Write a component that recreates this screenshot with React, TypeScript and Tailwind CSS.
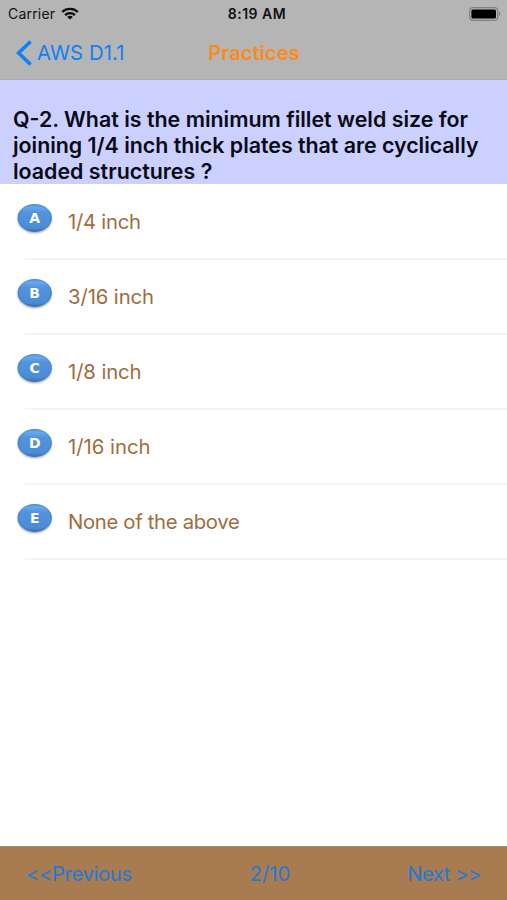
import { useState } from "react"

interface Option {
  letter: string
  text: string
  tracking: string
}

const options: Option[] = [
  { letter: "A", text: "1/4 inch", tracking: "tracking-[-0.25px]" },
  { letter: "B", text: "3/16 inch", tracking: "tracking-[-0.1px]" },
  { letter: "C", text: "1/8 inch", tracking: "tracking-[-0.1px]" },
  { letter: "D", text: "1/16 inch", tracking: "tracking-[0px]" },
  { letter: "E", text: "None of the above", tracking: "tracking-[-0.32px]" },
]

function WifiIcon() {
  return (
    <svg width="18" height="14" viewBox="0 0 18 14" fill="none" stroke="#0a0a0a" strokeWidth="2.4">
      <path d="M1.2 5C5.5 0.8 12.5 0.8 16.8 5" />
      <path d="M4.1 8.1C6.8 5.5 11.2 5.5 13.9 8.1" />
      <path d="M9 12.6L6.2 9.9C7.8 8.5 10.2 8.5 11.8 9.9Z" fill="#0a0a0a" stroke="none" />
    </svg>
  )
}

function BatteryIcon() {
  return (
    <svg width="32" height="14" viewBox="0 0 32 14" fill="none">
      <rect x="0.7" y="0.7" width="28" height="12.6" rx="3.4" stroke="#808080" strokeWidth="1.2" />
      <rect x="2.4" y="2.4" width="24.6" height="9.2" rx="1.6" fill="#000" />
      <path d="M30 4.8C31.6 5.4 31.6 8.6 30 9.2Z" fill="#777" />
    </svg>
  )
}

function Badge({ letter }: { letter: string }) {
  return (
    <svg width="40" height="36" viewBox="0 0 40 36" className="mt-[17px] shrink-0">
      <defs>
        <linearGradient id={"fill" + letter} x1="0" y1="0" x2="0" y2="1">
          <stop offset="0" stopColor="#5094dc" />
          <stop offset="0.12" stopColor="#68a7ea" />
          <stop offset="0.3" stopColor="#5293dc" />
          <stop offset="0.85" stopColor="#4b8cd6" />
          <stop offset="1" stopColor="#396ba9" />
        </linearGradient>
        <filter id={"shadow" + letter} x="-20%" y="-20%" width="140%" height="150%">
          <feGaussianBlur stdDeviation="1" />
        </filter>
      </defs>
      <ellipse cx="19.7" cy="18.3" rx="16.6" ry="13.8" fill="#5d6673" opacity="0.65" filter={"url(#shadow" + letter + ")"} />
      <ellipse cx="19.7" cy="16.9" rx="17.2" ry="14" fill={"url(#fill" + letter + ")"} />
      <ellipse cx="19.7" cy="16.7" rx="16.4" ry="13.2" fill="none" stroke="#3d76b9" strokeWidth="0.8" opacity="0.4" />
      <text x="19.7" y="22" textAnchor="middle" fill="#fff" fontSize="14" fontWeight="700" fontFamily="'DejaVu Sans', sans-serif">
        {letter}
      </text>
    </svg>
  )
}

export default function App() {
  const [selected, setSelected] = useState("")

  return (
    <div className="flex h-[900px] w-full flex-col overflow-hidden bg-white font-['Inter',sans-serif]">
      <header className="h-[80px] shrink-0 border-b border-[#aaaab8] bg-[#b5b5b5]">
        <div className="grid h-[27px] grid-cols-3 items-center pr-[6px] pl-[8px] text-[14px] text-[#111]">
          <div className="flex items-center gap-[6px]">
            <span className="tracking-[0.2px]">Carrier</span>
            <WifiIcon />
          </div>
          <span className="pl-[5px] text-center font-semibold tracking-[0.5px]">8:19 AM</span>
          <div className="flex justify-end">
            <BatteryIcon />
          </div>
        </div>
        <div className="grid h-[52px] grid-cols-3 items-center px-[16px] text-[20.3px]">
          <button className="flex items-center gap-[5px] text-[#1180f5]">
            <svg width="16" height="26" viewBox="0 0 16 26" fill="none" stroke="currentColor" strokeWidth="3.6">
              <path d="M14.6 1.5L2.6 13L14.6 24.5" />
            </svg>
            <span className="whitespace-nowrap tracking-[0.1px]">AWS D1.1</span>
          </button>
          <h1 className="pl-px text-center font-semibold tracking-[-0.05px] text-[#f98b1c]">Practices</h1>
        </div>
      </header>

      <section className="h-[104px] shrink-0 bg-[#ccd0ff] pt-[26px] pl-[13px] text-[21.4px] leading-[26.2px] font-semibold text-[#080a16]">
        <p className="whitespace-nowrap">Q-2. What is the minimum fillet weld size for</p>
        <p className="whitespace-nowrap tracking-[-0.03px]">joining 1/4 inch thick plates that are cyclically</p>
        <p className="whitespace-nowrap">loaded structures ?</p>
      </section>

      <ul className="flex-1">
        {options.map((option) => (
          <li key={option.letter} className="h-[75px]">
            <button
              onClick={() => setSelected(option.letter)}
              aria-pressed={selected === option.letter}
              className="flex h-[74px] w-full items-start pl-[15px] text-left"
            >
              <Badge letter={option.letter} />
              <span className={"mt-[23px] ml-[13px] text-[20.3px] leading-[30px] text-[#a16c3b] " + option.tracking}>
                {option.text}
              </span>
            </button>
            <div className="ml-[25px] h-[2px] bg-[#f4f4f4]" />
          </li>
        ))}
      </ul>

      <footer className="flex h-[54px] shrink-0 items-center justify-between border-t border-[#a58d78] bg-[#a87b50] px-[26px] pt-px text-[20.3px] text-[#1f7ad8]">
        <button className="tracking-[-0.4px]">&lt;&lt;Previous</button>
        <span className="ml-px">2/10</span>
        <button className="tracking-[-0.5px]">Next &gt;&gt;</button>
      </footer>
    </div>
  )
}
